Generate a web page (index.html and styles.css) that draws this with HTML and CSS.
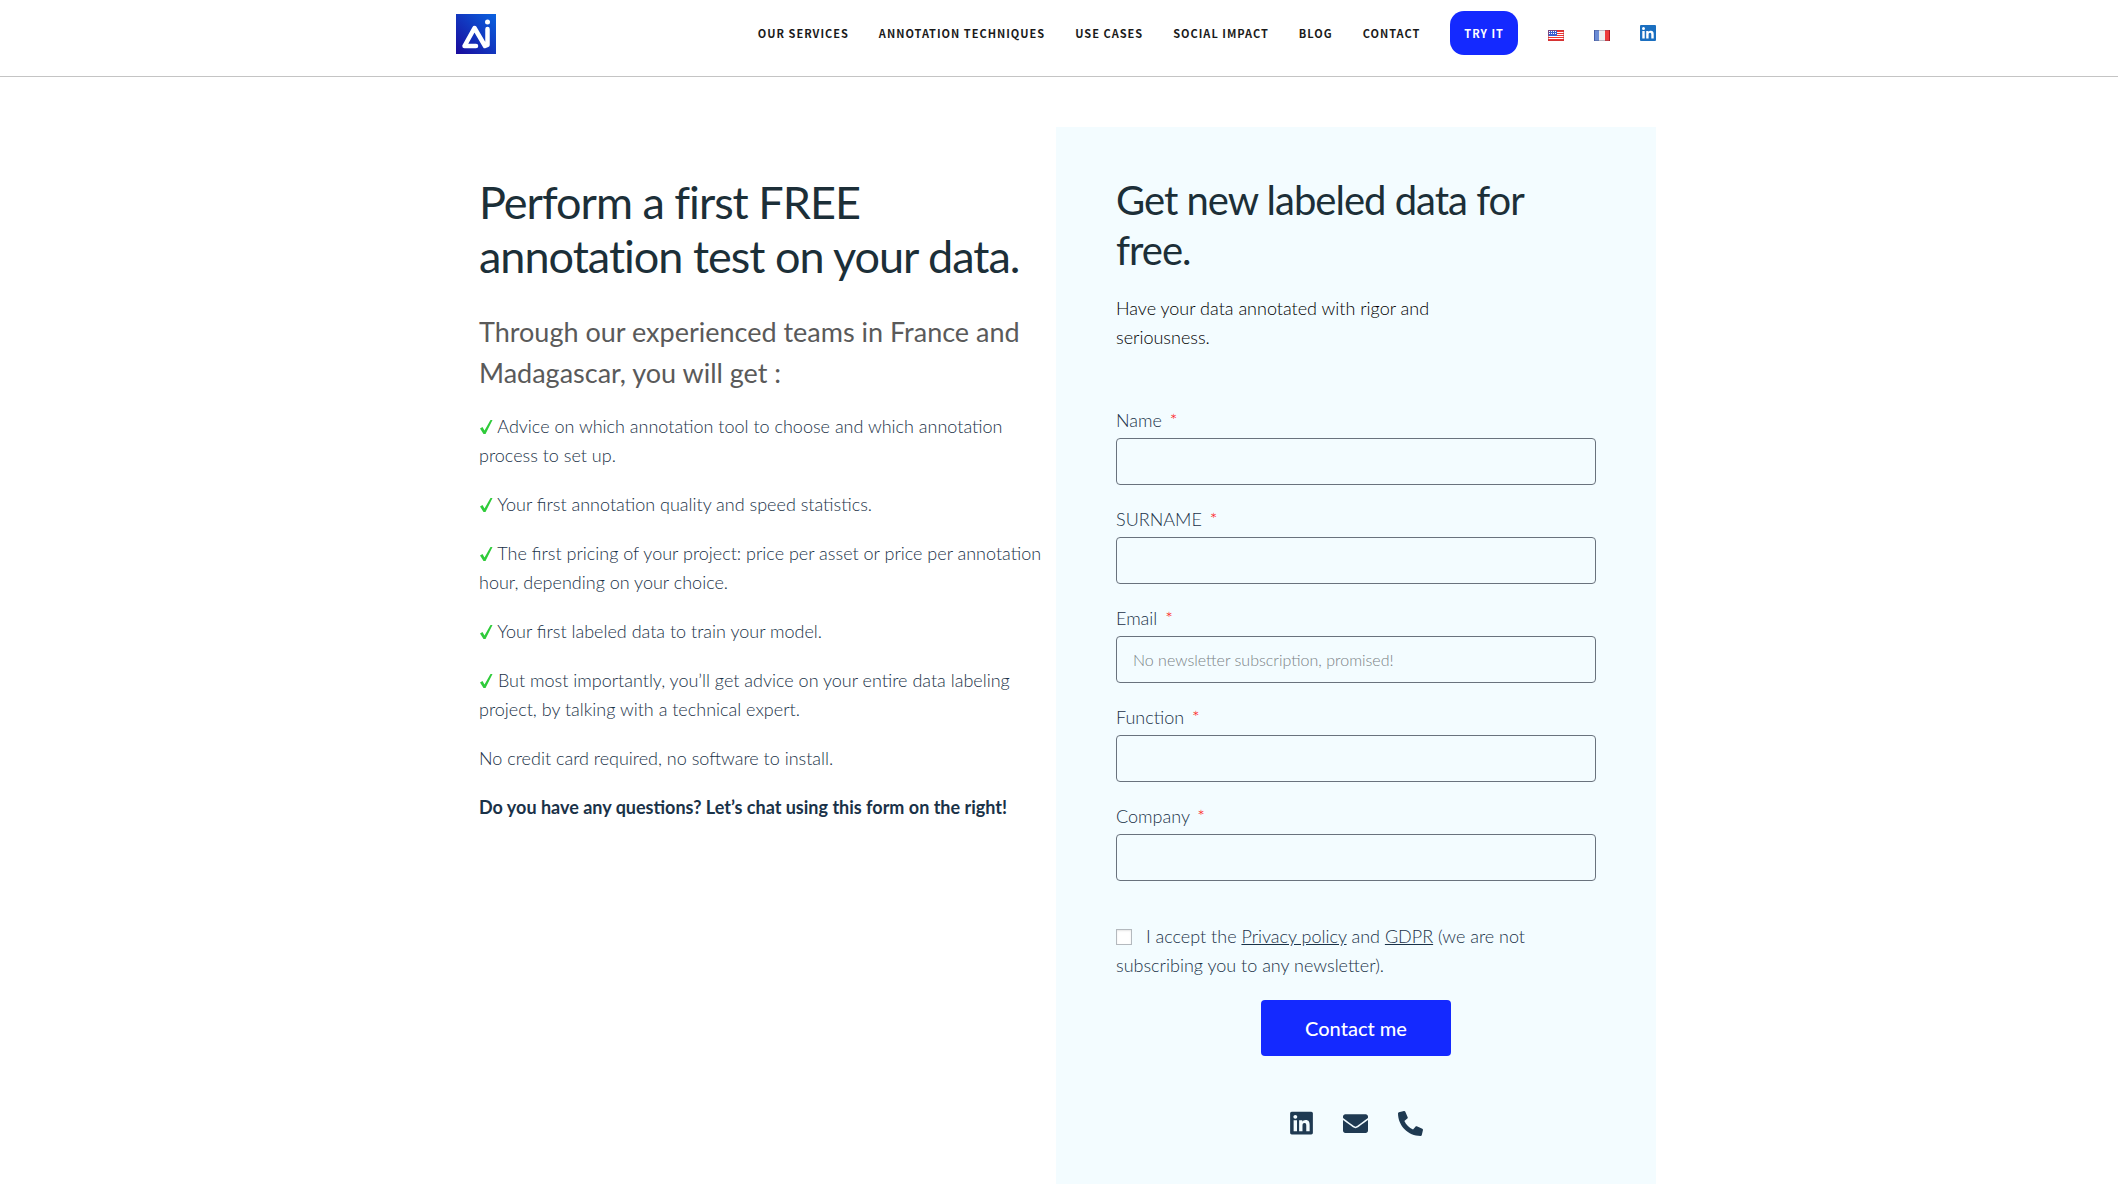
FILE: index.html
```html
<!DOCTYPE html>
<html lang="en">
<head>
	<meta charset="utf-8">
	<meta name="viewport" content="width=device-width, initial-scale=1">
	<title>Free annotation test</title>
	<link rel="stylesheet" href="styles.css">
</head>
<body>

<header class="site-header">
	<div class="container header-inner">
		<a href="#" class="logo" aria-label="Home">
			<svg width="40" height="40" viewBox="0 0 40 40">
				<defs>
					<linearGradient id="logo-bg" x1="0" y1="1" x2="1" y2="0">
						<stop offset="0" stop-color="#1a0a9c"/>
						<stop offset="1" stop-color="#0a62e0"/>
					</linearGradient>
				</defs>
				<rect width="40" height="40" fill="url(#logo-bg)"/>
				<path d="M20 32H8.500L18.500 14L29 32L31.500 31V15" fill="none" stroke="#fff" stroke-width="4.500" stroke-linecap="round" stroke-linejoin="round"/>
				<circle cx="31.500" cy="8" r="2.500" fill="#fff"/>
			</svg>
		</a>
		<nav class="main-nav">
			<a href="#">Our services</a>
			<a href="#">Annotation techniques</a>
			<a href="#">Use cases</a>
			<a href="#">Social impact</a>
			<a href="#">Blog</a>
			<a href="#">Contact</a>
			<a href="#" class="nav-button">Try it</a>
			<a href="#" class="nav-icon flag" aria-label="English">
				<svg width="16" height="11" viewBox="0 0 16 11">
					<rect width="16" height="11" fill="#e33"/>
					<path d="M0 2.500H16M0 4.500H16M0 6.500H16M0 8.500H16" stroke="#fff"/>
					<rect width="9" height="6" fill="#3a5fd0"/>
					<path d="M1 1.500H9M1 3.500H9" stroke="#fff" stroke-dasharray="1 1"/>
					<rect x=".5" y=".5" width="15" height="10" fill="none" stroke="#b33" stroke-opacity=".5"/>
				</svg>
			</a>
			<a href="#" class="nav-icon flag" aria-label="Français">
				<svg width="16" height="11" viewBox="0 0 16 11">
					<rect width="16" height="11" fill="#eee"/>
					<rect width="5" height="11" fill="#6b8bd4"/>
					<rect x="11" width="5" height="11" fill="#ee3a3a"/>
					<path d="M.5 0V11" stroke="#4468c4"/>
					<path d="M15.500 0V11" stroke="#d00"/>
					<rect x=".5" y=".5" width="15" height="10" fill="none" stroke="#446" stroke-opacity=".3"/>
				</svg>
			</a>
			<a href="#" class="nav-icon" aria-label="LinkedIn">
				<svg width="16" height="16" viewBox="0 0 16 16">
					<rect width="16" height="16" rx="1" fill="#1b6fc0"/>
					<circle cx="3.500" cy="3.500" r="1.500" fill="#fff"/>
					<path d="M2.300 6H4.700V13.600H2.300ZM6.200 6H8.500V7.100C9 6.300 9.800 5.800 10.900 5.800C13.100 5.800 13.700 7.200 13.700 9.300V13.600H11.300V9.800C11.300 8.800 11.200 7.800 10 7.800C8.900 7.800 8.600 8.700 8.600 9.800V13.600H6.200Z" fill="#fff"/>
				</svg>
			</a>
		</nav>
	</div>
</header>

<main class="container columns">
	<section class="pitch">
		<h1>Perform a first FREE annotation test on your data.</h1>
		<h2>Through our experienced teams in France and Madagascar, you will get :</h2>
		<p><svg class="tick" width="14" height="16" viewBox="0 0 14 16"><path d="M1 9.500L3.500 8L5.500 11.500L11.500 1H13.500L6.500 15H4.500Z"/></svg> Advice on which annotation tool to choose and which annotation process to set up.</p>
		<p><svg class="tick" width="14" height="16" viewBox="0 0 14 16"><path d="M1 9.500L3.500 8L5.500 11.500L11.500 1H13.500L6.500 15H4.500Z"/></svg> Your first annotation quality and speed statistics.</p>
		<p><svg class="tick" width="14" height="16" viewBox="0 0 14 16"><path d="M1 9.500L3.500 8L5.500 11.500L11.500 1H13.500L6.500 15H4.500Z"/></svg> The first pricing of your project: price per asset or price per annotation hour, depending on your choice.</p>
		<p><svg class="tick" width="14" height="16" viewBox="0 0 14 16"><path d="M1 9.500L3.500 8L5.500 11.500L11.500 1H13.500L6.500 15H4.500Z"/></svg> Your first labeled data to train your model.</p>
		<p><svg class="tick" width="14" height="16" viewBox="0 0 14 16"><path d="M1 9.500L3.500 8L5.500 11.500L11.500 1H13.500L6.500 15H4.500Z"/></svg> But most importantly, you’ll get advice on your entire data labeling project, by talking with a technical expert.</p>
		<p>No credit card required, no software to install.</p>
		<p><strong>Do you have any questions? Let’s chat using this form on the right!</strong></p>
	</section>

	<section class="card">
		<h2>Get new labeled data for free.</h2>
		<p class="intro">Have your data annotated with rigor and seriousness.</p>

		<form class="form">
			<div class="field">
				<label for="name">Name <span class="required">*</span></label>
				<input type="text" id="name">
			</div>
			<div class="field">
				<label for="surname">SURNAME <span class="required">*</span></label>
				<input type="text" id="surname">
			</div>
			<div class="field">
				<label for="email">Email <span class="required">*</span></label>
				<input type="email" id="email" placeholder="No newsletter subscription, promised!">
			</div>
			<div class="field">
				<label for="function">Function <span class="required">*</span></label>
				<input type="text" id="function">
			</div>
			<div class="field">
				<label for="company">Company <span class="required">*</span></label>
				<input type="text" id="company">
			</div>
			<div class="accept">
				<input type="checkbox" id="accept">
				<label for="accept">I accept the <a href="#">Privacy policy</a> and <a href="#">GDPR</a> (we are not subscribing you to any newsletter).</label>
			</div>
			<button type="submit" class="submit">Contact me</button>
		</form>

		<div class="social">
			<a href="#" aria-label="LinkedIn">
				<svg width="23" height="26" viewBox="0 0 448 512"><path d="M416 32H31.900C14.300 32 0 46.500 0 64.300v383.400C0 465.500 14.300 480 31.900 480H416c17.600 0 32-14.500 32-32.300V64.300c0-17.800-14.400-32.300-32-32.300zM135.400 416H69V202.200h66.500V416zm-33.200-243c-21.300 0-38.500-17.300-38.500-38.500S80.900 96 102.200 96c21.200 0 38.500 17.300 38.500 38.500 0 21.300-17.200 38.500-38.500 38.500zm282.100 243h-66.400V312c0-24.800-.5-56.700-34.500-56.700-34.600 0-39.900 27-39.900 54.900V416h-66.400V202.200h63.700v29.200h.9c8.900-16.800 30.600-34.500 62.900-34.500 67.200 0 79.700 44.300 79.700 101.900V416z"/></svg>
			</a>
			<a href="#" aria-label="Email">
				<svg width="25" height="25" viewBox="0 0 512 512"><path d="M502.300 190.800c3.900-3.100 9.700-.2 9.700 4.700V400c0 26.500-21.500 48-48 48H48c-26.500 0-48-21.500-48-48V195.600c0-5 5.700-7.800 9.700-4.700 22.400 17.400 52.100 39.500 154.100 113.600 21.100 15.400 56.700 47.800 92.200 47.600 35.700.3 72-32.800 92.300-47.600 102-74.100 131.600-96.300 154-113.700zM256 320c23.200.4 56.600-29.200 73.400-41.400 132.700-96.300 142.800-104.700 173.400-128.700 5.800-4.500 9.200-11.500 9.200-18.900v-19c0-26.500-21.500-48-48-48H48c-26.500 0-48 21.500-48 48v19c0 7.400 3.400 14.300 9.200 18.900 30.600 23.900 40.700 32.400 173.400 128.700 16.800 12.200 50.200 41.800 73.400 41.400z"/></svg>
			</a>
			<a href="#" aria-label="Phone">
				<svg width="25" height="25" viewBox="0 0 512 512"><path transform="translate(512 0) scale(-1 1)" d="M493.400 24.600l-104-24c-11.300-2.600-22.900 3.300-27.500 13.900l-48 112c-4.200 9.800-1.400 21.300 6.900 28l60.600 49.600c-36 76.700-98.900 140.500-177.200 177.200l-49.600-60.600c-6.800-8.300-18.200-11.100-28-6.900l-112 48C3.900 366.500-2 378.100.6 389.400l24 104C27.100 504.200 36.700 512 48 512c256.100 0 464-207.500 464-464 0-11.200-7.700-20.900-18.600-23.400z"/></svg>
			</a>
		</div>
	</section>
</main>

</body>
</html>
```

FILE: styles.css
```css
* {
	box-sizing: border-box;
}
body {
	margin: 0;
	padding-right: 6px;
	background: #fff;
	color: #1a3248;
	font-family: Lato, sans-serif;
	font-size: 18px;
	font-weight: 300;
	line-height: 29px;
}
h1, h2, p {
	margin: 0;
	font-weight: 400;
}
a {
	color: inherit;
}
svg {
	display: block;
}
.container {
	width: 100%;
	max-width: 1200px;
	margin: 0 auto;
}

/* header */
.site-header {
	margin-right: -6px;
	padding-right: 6px;
	border-bottom: 1px solid #c4c4c4;
}
.header-inner {
	display: flex;
	justify-content: space-between;
	align-items: flex-start;
	padding: 11px 0 21px;
}
.logo {
	padding-top: 3px;
}
.main-nav {
	display: flex;
	align-items: center;
	gap: 30px;
	color: #1a1a1a;
	font-family: "Noto Sans CJK JP", sans-serif;
	font-size: 11px;
	font-weight: 700;
	line-height: 44px;
	letter-spacing: 1px;
	text-transform: uppercase;
}
.main-nav a {
	text-decoration: none;
}
.nav-button {
	padding: 0 14px;
	border-radius: 14px;
	background: #1429ff;
	color: #fff;
}
.flag {
	padding-top: 5px;
}

/* two columns */
.columns {
	display: grid;
	grid-template-columns: 1fr 1fr;
	padding-top: 50px;
}
.pitch {
	padding: 48px 8px 48px 23px;
}
.pitch h1 {
	margin-bottom: 28px;
	color: #1c2f38;
	font-size: 45px;
	line-height: 54px;
	letter-spacing: -1px;
}
.pitch h2 {
	margin-bottom: 19px;
	color: #5a5a5a;
	font-size: 27px;
	line-height: 41px;
}
.pitch p {
	margin-bottom: 20px;
	font-weight: 300;
}
.pitch strong {
	font-weight: 700;
}
.tick {
	display: inline-block;
	vertical-align: -2px;
	fill: #2fcb3a;
}

/* form card */
.card {
	padding: 48px 60px;
	background: #f3fcff;
}
.card h2 {
	margin-bottom: 19px;
	color: #1c2f38;
	font-size: 40px;
	line-height: 50px;
	letter-spacing: -1px;
}
.card .intro {
	max-width: 400px;
	margin-bottom: 54px;
	color: #000;
	font-weight: 300;
}
.form {
	display: flex;
	flex-direction: column;
	gap: 20px;
}
.field {
	display: flex;
	flex-direction: column;
	gap: 3px;
}
.required {
	margin-left: 3px;
	color: #f00;
}
.field input {
	height: 47px;
	padding: 0 16px;
	border: 1px solid #69727d;
	border-radius: 4px;
	background: transparent;
	color: inherit;
	font: inherit;
	font-size: 16px;
}
.field input::placeholder {
	color: #7a8286;
}
.accept {
	padding-top: 21px;
}
.accept input {
	appearance: none;
	width: 16px;
	height: 16px;
	margin: 0 9px 0 0;
	border: 1px solid #b4b9be;
	background: #fff;
	box-shadow: inset 0 1px 2px rgba(0, 0, 0, .1);
	vertical-align: -2px;
}
.submit {
	align-self: center;
	height: 56px;
	padding: 0 44px;
	border: 0;
	border-radius: 4px;
	background: #1429ff;
	color: #fff;
	font-family: inherit;
	font-size: 20px;
	font-weight: 500;
}
.social {
	display: flex;
	justify-content: center;
	align-items: center;
	gap: 30px;
	padding: 54px 0 10px;
	fill: #1f3a52;
}
```
